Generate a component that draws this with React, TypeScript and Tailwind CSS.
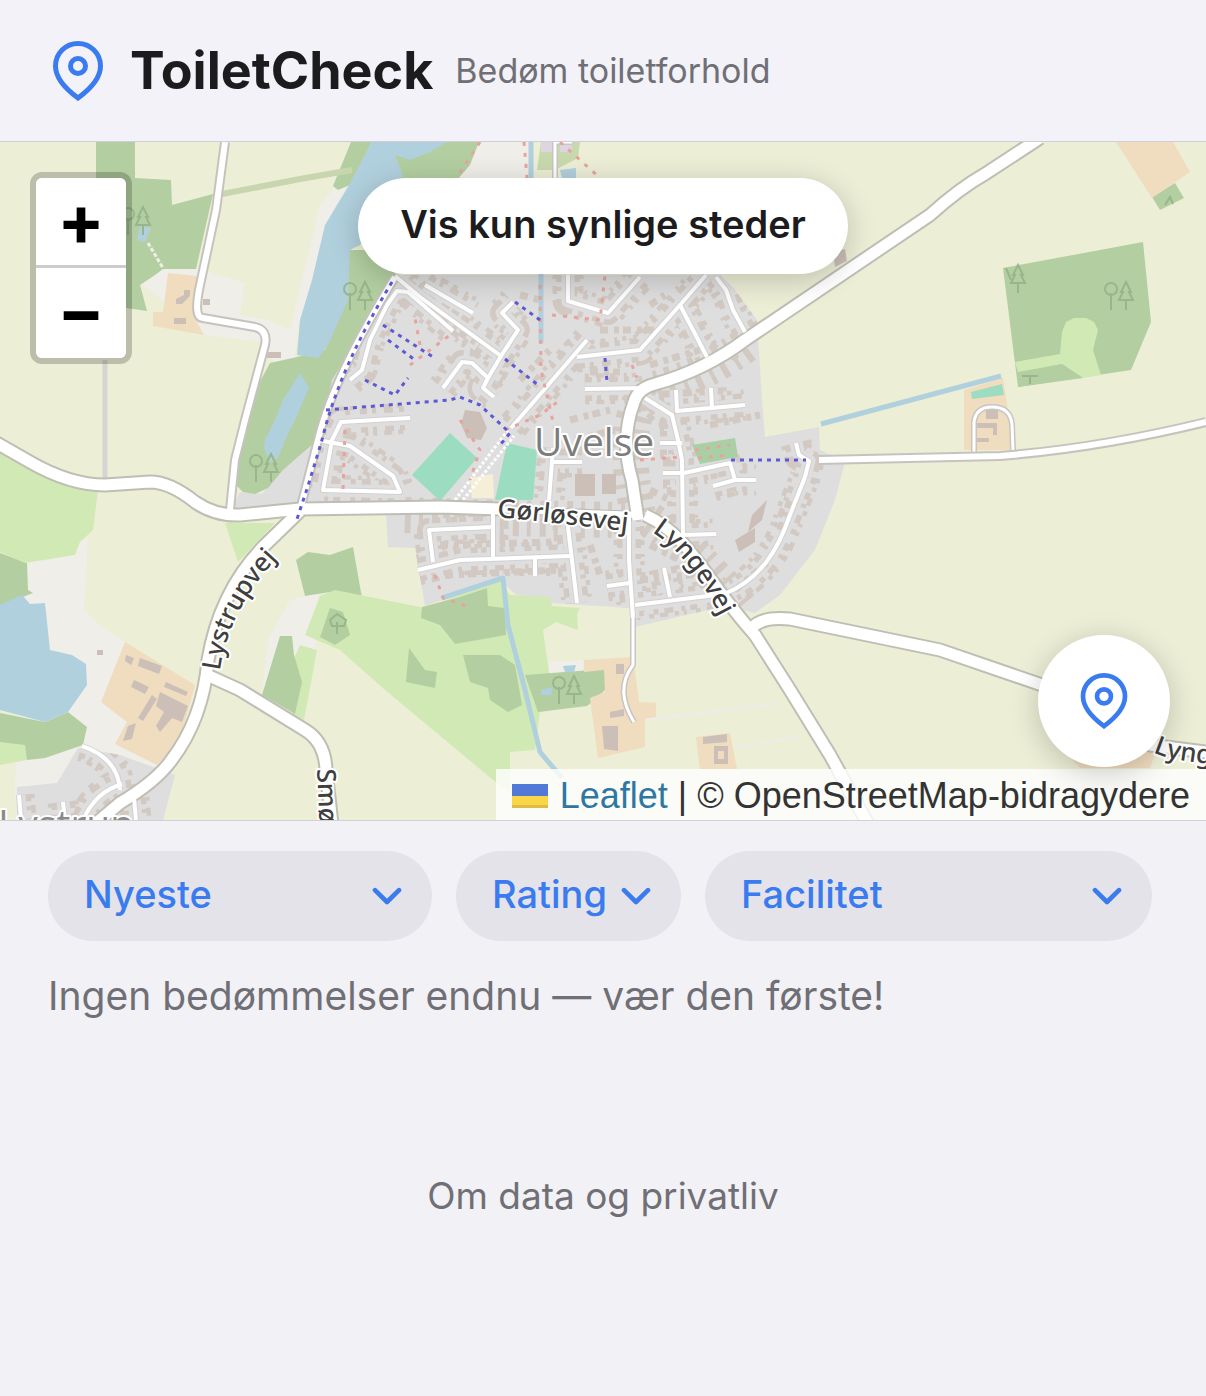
import { useState } from "react";

const areas = {
  land: [
    "141,283 163,269 197,268 245,283 240,315 268,320 290,330 303,275 320,205 334,188 350,185 300,320 294,362 285,366 272,360 262,342 204,335",
    "335,190 372,142 480,142 457,180 400,180 340,205",
    "478,142 530,142 530,180 455,180",
    "82,540 88,538 84,610 100,625 125,642 195,685 160,775 60,790 15,800 15,785 25,560",
    "290,600 318,592 316,650 262,690 268,640",
    "549,662 583,660 583,675 549,676",
  ],
  residential: [
    "397,275 720,275 735,290 757,320 762,400 765,437 819,427 820,450 845,462 835,500 815,550 780,595 755,613 725,606 635,627 630,608 550,603 515,594 500,580 425,606 415,548 388,547 386,515 300,507 320,400",
    "232,508 240,492 262,494 285,464 320,440 300,510",
    "17,787 57,783 78,748 120,755 175,775 163,820 17,820",
  ],
  forest: [
    "96,142 135,142 135,178 171,180 172,205 213,194 196,269 163,269 155,275 140,285 147,311 126,308 96,300",
    "351,142 372,142 350,185 338,190 333,186",
    "394,155 447,142 479,142 470,165 457,180 395,180",
    "348,250 370,250 397,275 332,380 318,440 300,455 283,470 268,488 255,494 243,492 236,485 240,450 250,400 270,363 297,357 325,350",
    "0,553 27,563 28,590 33,593 0,606",
    "0,713 45,722 68,712 87,727 83,745 45,758 27,760 0,742",
    "296,560 308,552 330,555 353,547 362,598 330,592 305,596",
    "1003,268 1143,242 1151,322 1131,370 1018,387",
    "1152,197 1175,183 1184,198 1160,210",
  ],
  grass: [
    "0,450 45,478 98,490 93,530 80,542 75,555 25,563 0,552",
    "225,523 275,523 238,562",
    "0,742 25,745 27,760 0,765",
    "320,596 335,590 425,608 500,580 510,595 550,597 552,606 580,608 577,614 578,630 556,622 543,630 550,680 605,702 540,712 535,750 510,752 510,792 493,780 385,690 340,650 305,635",
    "300,645 317,650 304,720 293,714 290,668",
    "1015,362 1060,354 1062,332 1066,322 1074,318 1086,318 1094,322 1098,330 1093,350 1101,375 1083,378 1062,364 1018,372",
  ],
  thicket: [
    "422,607 460,597 487,588 488,606 505,608 506,635 455,644 440,625 421,618",
    "463,655 500,655 515,665 522,705 508,712 490,700 488,688 470,682",
    "409,648 425,670 437,672 435,688 406,682",
    "330,608 343,612 350,635 335,645 320,637",
    "525,675 605,669 605,690 587,706 538,712",
    "280,636 292,636 294,655 302,682 295,714 262,695",
  ],
  water: [
    "372,142 447,142 430,152 410,160 395,155 403,175 360,245 350,250 348,300 328,345 318,358 297,355 300,320 312,280 325,225 349,185",
    "300,373 309,388 295,420 285,440 278,458 270,462 264,448 265,440 275,420 283,400",
    "0,605 22,595 30,604 45,603 50,650 72,655 86,664 87,685 68,712 45,722 0,710",
    "140,226 151,228 145,242 137,240",
    "560,170 576,168 576,178 562,178",
    "541,690 553,687 551,695 541,695",
    "563,666 576,665 574,672 565,672",
  ],
  farmyard: [
    "168,273 197,276 193,315 204,335 153,326 153,312 163,312",
    "125,642 195,685 180,740 157,765 115,744 127,722 101,702",
    "584,660 633,657 639,702 656,703 656,718 645,720 645,747 598,758 590,698 605,692 604,670 584,672",
    "696,737 730,733 737,769 700,769",
    "1116,142 1173,142 1190,172 1152,198",
    "964,390 1003,378 1014,450 964,450",
    "1048,735 1160,740 1150,768 1080,768",
  ],
  pitch: [
    "450,433 477,458 440,501 412,475",
    "507,443 537,450 533,500 495,500",
    "971,392 1002,384 1004,395 972,399",
  ],
};

// Residential streets, each gets a row of houses on both sides
const streets = [
  "M350 380 L362 370 L370 340 L387 305 L397 291 L408 292 L453 331",
  "M395 276 L420 297 L501 356 L518 330 L502 313 L513 302",
  "M425 285 L473 313",
  "M443 388 L462 362 L472 363 L488 378 L483 388 L494 397",
  "M501 356 L488 378",
  "M587 340 L511 428",
  "M577 357 L640 350 L680 305 L706 275",
  "M680 305 L707 357",
  "M716 277 L726 290 L733 310 L745 332",
  "M568 275 L568 301 L608 313 L640 277",
  "M585 389 L642 388",
  "M318 440 L350 446 L393 476 L400 492 L323 490 L332 440 L341 422 L410 418",
  "M645 398 L672 415 L678 440 L682 460 L683 535 L716 534",
  "M676 390 L677 411 L745 405",
  "M711 388 L712 408",
  "M660 443 L682 443",
  "M663 473 L684 473 L730 463 L735 480 L756 480",
  "M713 486 L735 480",
  "M796 443 L799 455 L809 461 L805 477 L790 515 C778 550 760 580 724 594 L635 605",
  "M553 448 L549 500",
  "M553 462 L582 462",
  "M493 510 L493 557",
  "M433 562 L429 530 L492 527",
  "M418 570 L460 560 L570 556",
  "M566 510 L577 603",
  "M535 557 L535 576",
  "M607 586 L630 583",
  "M664 568 L670 597",
  "M629 515 L629 560 L633 618",
  "M82 746 Q118 758 120 790",
  "M84 818 Q96 792 122 784",
  "M19 795 L21 820",
  "M63 802 L65 820",
  "M134 798 L136 820",
];

const minorRoads = [
  "M225 142 L216 210 L200 285 Q193 318 203 318 L255 327 Q268 330 265 345 L245 420 L235 460 L230 510",
  "M395 277 C360 335 330 390 318 440 L300 510",
  "M819 460 L1000 456 Q1100 448 1206 422",
];

const mainRoads = [
  "M-5 442 L30 462 Q70 485 105 485 L150 482 Q170 482 195 502 Q215 516 240 515 L300 509 L440 507 L500 509",
  "M300 511 L265 545 Q220 590 208 660 Q203 720 170 762 Q155 782 120 803 L95 824",
  "M207 675 L240 690 L305 730 Q325 742 326 770 L332 824",
  "M645 515 C690 535 705 580 755 635 L790 690 L830 755 L868 824",
  "M752 628 Q762 616 790 619 L940 650 L1045 686 Q1120 715 1150 745 L1206 752",
  "M638 520 L632 480 Q620 440 634 402 Q638 388 655 384 Q705 370 745 340 L930 215 Q960 188 985 174 L1040 138",
];

const footpaths = [
  "M326 410 L450 400 L460 397 L480 405 L510 433 L500 445",
  "M392 282 C358 338 334 390 322 440 L308 486 L296 522",
  "M731 460 L806 460",
  "M515 302 L540 320",
  "M383 325 L433 357",
  "M388 340 L415 360",
  "M365 380 L395 395 L408 378",
  "M505 359 L538 385",
  "M605 358 L607 382",
];

const tracks = [
  "M480 142 L455 180",
  "M524 142 L527 178",
  "M560 142 L600 178",
  "M540 285 L541 370 L555 430",
  "M552 315 L600 320 L605 275",
  "M410 365 L450 335",
  "M420 345 L415 318",
  "M460 420 L480 450 L470 480",
  "M505 430 L540 415 L560 400",
  "M345 430 L343 490",
  "M640 460 L680 457",
  "M695 450 L730 445",
  "M698 458 L730 455",
  "M435 575 L443 598 L466 606",
  "M632 365 L637 378",
];

const buildings =
  "M140 658 l22 8 -3 8 -21 -8z M134 680 l15 7 -4 7 -14 -7z M160 692 l28 14 -6 16 -10 -4 -12 14 -4 -6 8 -14 -8 -6z M126 655 l8 3 -3 7 -6 -4z M152 695 l5 4 -14 22 -5 -3z M128 726 l8 -3 -4 16 -9 2z M166 682 l22 10 -2 4 -22 -9z M602 726 l16 0 0 25 -14 -2z M610 712 l14 -3 0 7 -14 2z M616 664 l8 0 0 10 -8 0z M703 737 l24 -3 0 8 -24 2z M714 746 h14 v18 h-14z M718 751 v8 h6 v-8z M986 405 l12 0 0 14 -12 0z M977 423 l20 0 0 12 -4 0 0 -7 -16 0z M977 438 l12 0 0 4 -12 0z M575 474 l20 0 0 22 -20 0z M602 474 l14 0 0 20 -14 0z M752 515 l15 -15 -5 20 -14 12z M735 540 l20 -12 0 14 -16 10z M184 290 l6 0 0 6 -8 8 -6 0 0 -5 8 -4z M174 318 l12 0 0 6 -12 0z M203 299 l7 0 0 6 -7 0z M267 352 l14 0 0 6 -14 0z M97 650 l6 0 0 5 -6 0z M465 410 l15 2 7 16 -6 12 -14 -2 -6 -14z M833 252 l12 -3 2 12 -12 6z";

function Polygons({ points, fill }: { points: string[]; fill: string }) {
  return (
    <g fill={fill}>
      {points.map((p) => (
        <polygon key={p} points={p} />
      ))}
    </g>
  );
}

function Lines({
  paths,
  stroke,
  width,
  dash,
}: {
  paths: string[];
  stroke: string;
  width: number;
  dash?: string;
}) {
  return (
    <g fill="none" stroke={stroke} strokeWidth={width} strokeDasharray={dash} strokeLinejoin="round">
      {paths.map((d) => (
        <path key={d} d={d} />
      ))}
    </g>
  );
}

function Trees({ x, y }: { x: number; y: number }) {
  return (
    <g transform={`translate(${x} ${y})`} fill="none" stroke="#97b68b" strokeWidth="2">
      <circle cx="7" cy="8" r="6" />
      <path d="M7 12 V29 M22 20 V29 M22 1 L17 11 H19 L15 19 H29 L25 11 H27 Z" />
    </g>
  );
}

function MapCanvas() {
  return (
    <svg
      viewBox="0 142 1206 678"
      preserveAspectRatio="xMidYMid slice"
      className="block h-full w-full"
      role="img"
      aria-label="Uvelse"
    >
      <defs>
        <clipPath id="town">
          {areas.residential.map((p) => (
            <polygon key={p} points={p} />
          ))}
        </clipPath>
        <path id="gorlosevej" d="M497 517 Q560 523 640 533" />
        <path id="lyngevej" d="M652 532 Q690 556 722 620" />
        <path id="lystrupvej" d="M220 671 Q228 610 280 555" />
        <path id="smorvej" d="M317 769 L321 860" />
        <path id="lyngevej-east" d="M1153 752 Q1170 762 1240 766" />
      </defs>

      <rect y="142" width="1206" height="678" fill="#eceed6" />
      <Polygons points={areas.land} fill="#f0eee9" />
      <Polygons points={areas.residential} fill="#dfdedf" />
      <Polygons points={areas.forest} fill="#b3cfa1" />
      <Polygons points={areas.grass} fill="#d1eab5" />
      <Polygons points={areas.thicket} fill="#b3cfa1" />
      <polygon points="1018,374 1062,364 1083,378 1018,387" fill="#b3cfa1" />
      <Polygons points={areas.water} fill="#b1d0dd" />
      <Polygons points={areas.farmyard} fill="#f0dcbf" />
      <polygon points="541,142 580,142 578,158 555,170 537,170" fill="#c9d9ae" />
      <path d="M541 142 h14 v10 h-14z M560 144 h12 v8 h-12z" fill="#ddd5df" />

      <g clipPath="url(#town)">
        <Lines paths={streets} stroke="#d2c9c2" width={31} dash="4 7 8 6 5 9 3 5" />
        <Lines paths={streets} stroke="#dfdedf" width={22} />
        <Lines paths={streets} stroke="#d2c9c2" width={24} dash="7 5 4 8 9 6 5 10" />
        <Lines
          paths={[
            "M745 345 Q705 375 655 389 Q625 400 632 480 L638 515",
            "M405 515 L500 518 L625 520",
            "M650 520 Q690 545 745 612",
          ]}
          stroke="#d2c9c2"
          width={36}
          dash="6 8 4 9"
        />
        <Lines paths={streets} stroke="#dfdedf" width={13} />
        <Lines
          paths={[
            "M600 330 L660 330",
            "M590 372 L620 372",
            "M650 365 L700 350",
            "M570 420 L610 410",
            "M710 345 L740 360",
            "M710 425 L760 415",
            "M445 575 L560 570",
            "M440 545 L555 542",
            "M590 545 L600 575",
            "M650 490 L670 500",
            "M780 530 L790 500",
            "M520 295 L540 300",
            "M650 305 L665 295",
            "M440 320 L480 345",
            "M520 380 L550 350",
            "M575 440 L615 430",
            "M735 590 L770 560",
            "M640 580 L690 575",
            "M650 545 L680 560",
          ]}
          stroke="#d2c9c2"
          width={7}
          dash="8 6 5 4"
        />
      </g>
      <path d={buildings} fill="#cbbfb7" fillRule="evenodd" />

      <polygon points="692,445 735,438 738,457 700,464" fill="#a9cfa4" />
      <polygon points="470,478 493,474 494,498 472,498" fill="#f4efd6" />
      <Polygons points={areas.pitch} fill="#9cdcc0" />

      <Lines paths={["M222 194 L300 179 L352 170"]} stroke="#c8d5ae" width={6} />
      <Lines
        paths={["M442 598 L503 578 L508 625 L525 690 L540 752 L562 778", "M821 424 L1001 376"]}
        stroke="#b1d0dd"
        width={5}
      />
      <Lines paths={["M541 272 V343", "M531 142 V180"]} stroke="#b1d0dd" width={5} />
      <Lines paths={["M645 720 L780 703", "M738 748 L800 736"]} stroke="#eeece4" width={3} />
      <Lines paths={["M105 360 V480"]} stroke="#d6d5d4" width={5} />
      <Lines paths={["M148 243 L163 268"]} stroke="#f0eee9" width={3} dash="4 2" />

      <Lines
        paths={[
          "M974 452 V422 Q976 407 992 407 Q1010 407 1012 424 L1013 450",
          "M633 615 L633 665 Q614 690 634 722",
          "M555 180 V142 H572",
        ]}
        stroke="#c8c5c2"
        width={6}
      />
      <Lines
        paths={[
          "M974 452 V422 Q976 407 992 407 Q1010 407 1012 424 L1013 450",
          "M633 615 L633 665 Q614 690 634 722",
          "M555 180 V142 H572",
        ]}
        stroke="#fff"
        width={3}
      />
      <Lines paths={["M455 500 L508 430", "M463 500 L514 436"]} stroke="#fff" width={3} dash="3 2" />
      <Lines paths={streets} stroke="#d3d1d0" width={6} />
      <Lines paths={minorRoads} stroke="#c6c3bf" width={10} />
      <Lines paths={mainRoads} stroke="#bfbeb4" width={15} />
      <Lines paths={["M490 509 L560 512 L640 515"]} stroke="#b9b8b0" width={8} />
      <Lines paths={streets} stroke="#fff" width={4} />
      <Lines paths={minorRoads} stroke="#fff" width={6} />
      <Lines paths={["M490 509 L560 512 L640 515"]} stroke="#fff" width={6} />
      <Lines paths={mainRoads} stroke="#fff" width={11} />
      <Lines paths={tracks} stroke="#e8a49c" width={3} dash="4 7" />
      <Lines paths={footpaths} stroke="#5d58d6" width={3} dash="4 5" />

      <Trees x={121} y={206} />
      <Trees x={343} y={281} />
      <Trees x={249} y={453} />
      <Trees x={1104} y={281} />
      <Trees x={552} y={675} />
      <g fill="none" stroke="#97b68b" strokeWidth="2">
        <path d="M1018 284 V293 M1018 265 L1013 275 H1015 L1011 283 H1025 L1021 275 H1023 Z M1006 268 L1011 280" />
        <path d="M337 614 l-7 6 2 6 h12 l2 -6z M337 622 V634 M1022 376 H1038 M1030 376 V384 M1165 205 l5 -8 3 7" />
      </g>

      <g
        className="font-['Noto_Sans',sans-serif]"
        stroke="#fff"
        strokeWidth="4"
        strokeLinejoin="round"
        paintOrder="stroke"
      >
        <text x="534" y="456" fontSize="39" fill="#7c7c7c" className="font-['Open_Sans',sans-serif]">
          Uvelse
        </text>
        <text x="-2" y="838" fontSize="39" fill="#8a8a8a" className="font-['Open_Sans',sans-serif]">
          Lystrup
        </text>
        <g fontSize="26" fontWeight="500" fill="#3f3f3f">
          <text>
            <textPath href="#gorlosevej">Gørløsevej</textPath>
          </text>
          <text>
            <textPath href="#lyngevej">Lyngevej</textPath>
          </text>
          <text>
            <textPath href="#lystrupvej">Lystrupvej</textPath>
          </text>
          <text>
            <textPath href="#smorvej">Smør</textPath>
          </text>
          <text>
            <textPath href="#lyngevej-east">Lynge</textPath>
          </text>
        </g>
      </g>
    </svg>
  );
}

function PinIcon({ className }: { className: string }) {
  return (
    <svg viewBox="0 0 60 60" fill="none" stroke="currentColor" strokeWidth="5" className={className} aria-hidden="true">
      <path d="M30 57 C17 47.5 7.5 37 7.5 25 A22.5 22.5 0 0 1 52.5 25 C52.5 37 43 47.5 30 57 Z" />
      <circle cx="30" cy="25" r="7.5" />
    </svg>
  );
}

const filters = ["Nyeste", "Rating", "Facilitet"];

export default function App() {
  const [onlyVisible, setOnlyVisible] = useState(false);

  return (
    <div className="min-h-screen bg-[#f2f1f6] font-['Inter',sans-serif] text-[#1c1c1e]">
      <header className="flex h-[142px] items-center gap-[22px] border-b border-[#cfced6] bg-[#f3f2f8] px-12">
        <PinIcon className="h-15 w-15 shrink-0 text-[#3a7bf0]" />
        <h1 className="text-[52px] leading-none font-bold">ToiletCheck</h1>
        <p className="text-[34px] text-[#6f6f75]">Bedøm toiletforhold</p>
      </header>

      <section className="relative h-[679px] overflow-hidden border-b border-[#d2d1d6]">
        <MapCanvas />

        <div className="absolute top-[30px] left-[30px] flex flex-col overflow-hidden rounded-xl border-6 border-black/20 bg-clip-padding">
          <button
            type="button"
            aria-label="Zoom ind"
            className="flex h-[90px] w-[90px] items-center justify-center border-b-3 border-[#ccc] bg-white pb-1 text-[70px] leading-none font-bold text-black"
          >
            +
          </button>
          <button
            type="button"
            aria-label="Zoom ud"
            className="flex h-[90px] w-[90px] items-center justify-center bg-white pb-1 text-[70px] leading-none font-bold text-black"
          >
            −
          </button>
        </div>

        <div className="absolute inset-x-0 top-9 flex justify-center">
          <button
            type="button"
            aria-pressed={onlyVisible}
            onClick={() => setOnlyVisible(!onlyVisible)}
            className="h-24 rounded-full bg-white px-[42px] pb-1 text-[38px] font-semibold shadow-[0_6px_30px_rgba(0,0,0,0.2)]"
          >
            Vis kun synlige steder
          </button>
        </div>

        <div className="absolute right-0 bottom-0 flex h-[51px] items-center gap-3 bg-white/80 px-4 pt-[3px] font-['Liberation_Sans',sans-serif] text-[36px] text-[#333]">
          <svg viewBox="0 0 36 24" className="h-6 w-9" aria-hidden="true">
            <path fill="#5379d8" d="M0 0h36v12H0z" />
            <path fill="#f9d648" d="M0 12h36v12H0z" />
            <path fill="#dcbc45" d="M0 21h36v3H0z" />
          </svg>
          <p className="leading-none">
            <a href="#leaflet" className="text-[#2f77a3]">
              Leaflet
            </a>{" "}
            | © OpenStreetMap-bidragydere
          </p>
        </div>

        <button
          type="button"
          aria-label="Min placering"
          className="absolute right-9 bottom-[53px] flex h-[132px] w-[132px] items-center justify-center rounded-full bg-white text-[#3a7bf0] shadow-[0_6px_30px_rgba(0,0,0,0.2)]"
        >
          <PinIcon className="h-14 w-14" />
        </button>
      </section>

      <main className="px-12 pt-[30px]">
        <div className="grid grid-cols-[384fr_225fr_447fr] gap-6 pr-[6px]">
          {filters.map((label) => (
            <div key={label} className="relative">
              <select
                aria-label={label}
                className="h-[90px] w-full appearance-none rounded-full bg-[#e4e3e9] pr-16 pb-1 pl-9 text-[38px] font-medium text-[#3a7bf0]"
              >
                <option>{label}</option>
              </select>
              <svg
                viewBox="0 0 30 18"
                fill="none"
                stroke="currentColor"
                strokeWidth="4.6"
                strokeLinecap="round"
                strokeLinejoin="round"
                className="pointer-events-none absolute top-9 right-[30px] h-[18px] w-[30px] text-[#3a7bf0]"
                aria-hidden="true"
              >
                <path d="M3 3.2 L15 15 L27 3.2" />
              </svg>
            </div>
          ))}
        </div>
        <p className="mt-[26px] text-[39px] text-[#6f6f75]">Ingen bedømmelser endnu — vær den første!</p>
      </main>

      <footer className="mt-[142px] text-center">
        <a href="#privatliv" className="text-[37px] text-[#6f6f75]">
          Om data og privatliv
        </a>
      </footer>
    </div>
  );
}
